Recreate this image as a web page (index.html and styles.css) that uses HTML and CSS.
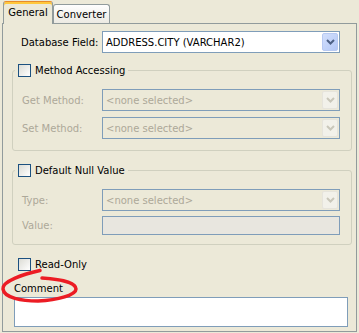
FILE: index.html
```html
<!DOCTYPE html>
<html lang="en">
<head>
  <meta charset="UTF-8" />
  <title>Mapping Properties</title>
  <link rel="stylesheet" href="styles.css">
</head>
<body>
  <div class="tabs">
    <div class="tab active">General</div>
    <div class="tab">Converter</div>
  </div>

  <div class="panel">
    <div class="row first">
      <span class="lbl wide">Database Field:</span>
      <div class="combo">
        <span class="value">ADDRESS.CITY (VARCHAR2)</span>
        <span class="arrow"><svg width="9" height="6" viewBox="0 0 9 6"><path d="M1 1 L4.5 4.5 L8 1" /></svg></span>
      </div>
    </div>

    <div class="group first-group">
      <div class="group-title"><span class="check"></span>Method Accessing</div>
      <div class="row spaced">
        <span class="lbl off">Get Method:</span>
        <div class="combo off">
          <span class="value">&lt;none selected&gt;</span>
          <span class="arrow"><svg width="9" height="6" viewBox="0 0 9 6"><path d="M1 1 L4.5 4.5 L8 1" /></svg></span>
        </div>
      </div>
      <div class="row">
        <span class="lbl off">Set Method:</span>
        <div class="combo off">
          <span class="value">&lt;none selected&gt;</span>
          <span class="arrow"><svg width="9" height="6" viewBox="0 0 9 6"><path d="M1 1 L4.5 4.5 L8 1" /></svg></span>
        </div>
      </div>
    </div>

    <div class="group second-group">
      <div class="group-title"><span class="check"></span>Default Null Value</div>
      <div class="row spaced">
        <span class="lbl off">Type:</span>
        <div class="combo off">
          <span class="value">&lt;none selected&gt;</span>
          <span class="arrow"><svg width="9" height="6" viewBox="0 0 9 6"><path d="M1 1 L4.5 4.5 L8 1" /></svg></span>
        </div>
      </div>
      <div class="row value-row">
        <span class="lbl off">Value:</span>
        <div class="textfield off"></div>
      </div>
    </div>

    <div class="readonly"><span class="check"></span>Read-Only</div>

    <div class="comment">
      <div class="comment-label">Comment</div>
      <div class="textarea"></div>
      <svg class="circle" width="82" height="46" viewBox="0 0 82 46">
        <path d="M40 8.5 C24 12 2 19 3 27 C4 36 22 39 38 39 C58 38 76 33 76 27 C76 20 58 17 42 16" />
      </svg>
    </div>
  </div>
</body>
</html>
```

FILE: styles.css
```css
body {
  margin: 0;
  background: #ece9d8;
  font-family: "DejaVu Sans", "Liberation Sans", sans-serif;
  font-size: 10px;
  color: #000;
}

.tabs {
  display: flex;
  align-items: flex-end;
  height: 23px;
  padding-left: 3px;
}

.tab {
  box-sizing: border-box;
  display: flex;
  align-items: center;
  justify-content: center;
  border: 1px solid #919b9c;
  border-bottom: none;
  border-radius: 3px 3px 0 0;
}

.tab.active {
  width: 50px;
  height: 23px;
  margin-bottom: -1px;
  padding-bottom: 2px;
  position: relative;
  z-index: 1;
  background: #ece9d8;
  border-top: 1px solid #e68b2c;
  box-shadow: inset 0 2px 0 #ffc83c;
}

.tab:not(.active) {
  width: 57px;
  height: 19px;
  background: linear-gradient(#fefefe, #eceae3);
}

.panel {
  box-sizing: border-box;
  width: 355px;
  margin-left: 2px;
  border: 1px solid #919b9c;
  padding: 7px 0 4px;
  background: #ece9d8;
}

.row {
  display: flex;
  align-items: center;
}

.row.first {
  margin-left: 18px;
}

.row + .row {
  margin-top: 6px;
}

.row.spaced {
  margin-top: 12px;
}

.row.value-row {
  margin-top: 5px;
}

.lbl {
  width: 80px;
  white-space: nowrap;
}

.lbl.wide {
  width: 81px;
}

.lbl.off {
  color: #aca899;
}

.combo {
  box-sizing: border-box;
  width: 238px;
  height: 22px;
  border: 1px solid #7f9db9;
  background: #fff;
  display: flex;
  align-items: center;
  justify-content: space-between;
  padding-left: 3px;
}

.combo.off {
  background: transparent;
}

.combo.off .value {
  color: #aca899;
}

.arrow {
  box-sizing: border-box;
  width: 16px;
  height: 18px;
  margin-right: 1px;
  border: 1px solid #b7c9f2;
  border-radius: 2px;
  background: linear-gradient(135deg, #d2dffc, #b4c8f6);
  display: flex;
  align-items: center;
  justify-content: center;
}

.arrow path {
  fill: none;
  stroke: #4d6185;
  stroke-width: 2;
}

.combo.off .arrow {
  background: #f2f1ea;
  border-color: #e6e4dc;
}

.combo.off .arrow path {
  stroke: #c9c7ba;
}

.textfield {
  box-sizing: border-box;
  width: 238px;
  height: 19px;
  border: 1px solid #7f9db9;
  background: #e8e6df;
}

.group {
  box-sizing: border-box;
  width: 340px;
  margin-left: 9px;
  border: 1px solid #d0d0bf;
  border-radius: 3px;
  padding: 0 11px 11px 9px;
}

.first-group {
  margin-top: 17px;
}

.second-group {
  margin-top: 19px;
  padding-bottom: 9px;
}

.group-title {
  display: flex;
  align-items: center;
  width: fit-content;
  height: 13px;
  margin: -7px 0 0 -7px;
  padding: 0 3px;
  background: #ece9d8;
}

.check {
  box-sizing: border-box;
  width: 13px;
  height: 13px;
  margin-right: 4px;
  border: 1px solid #1c5180;
  background: linear-gradient(135deg, #dcdcd5, #fff);
}

.readonly {
  display: flex;
  align-items: center;
  height: 13px;
  margin: 13px 0 0 15px;
}

.comment {
  position: relative;
  margin: 11px 0 0 11px;
}

.comment-label {
  line-height: 13px;
}

.textarea {
  box-sizing: border-box;
  width: 334px;
  height: 30px;
  margin-top: 2px;
  border: 1px solid #7f9db9;
  background: #fff;
}

.circle {
  position: absolute;
  left: -14px;
  top: -20px;
}

.circle path {
  fill: none;
  stroke: #ec1c24;
  stroke-width: 3.5;
  stroke-linecap: round;
}
```
